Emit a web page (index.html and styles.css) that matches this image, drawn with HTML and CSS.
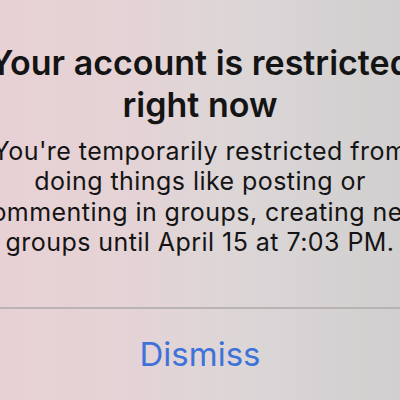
FILE: index.html
```html
<!DOCTYPE html>
<html lang="en">
<head>
    <meta charset="UTF-8">
    <meta name="viewport" content="width=device-width, initial-scale=1.0">
    <title>Account restricted</title>
    <link rel="stylesheet" href="styles.css">
</head>
<body>
    <div class="alert">
        <div class="alert-body">
            <h1 class="alert-title">Your account is restricted<br>right now</h1>
            <p class="alert-message">You're temporarily restricted from<br>doing things like posting or<br>commenting in groups, creating new<br>groups until April 15 at 7:03 PM.</p>
        </div>
        <div class="alert-actions">
            <button class="alert-button">Dismiss</button>
        </div>
    </div>
</body>
</html>
```

FILE: styles.css
```css
:root {
    --text: #141414;
    --blue: #3d72d9;
    --divider: #b9b3b4;
}

* {
    box-sizing: border-box;
    margin: 0;
    padding: 0;
}

html, body {
    height: 100%;
}

body {
    font-family: Inter, "Noto Sans", sans-serif;
    background: linear-gradient(90deg, #e8d1d4 0%, #e4d3d6 35%, #dcd6d7 60%, #d1cfcf 100%);
    overflow: hidden;
    display: flex;
    justify-content: center;
}

.alert {
    width: 460px;
    flex-shrink: 0;
    display: flex;
    flex-direction: column;
    text-align: center;
    color: var(--text);
}

.alert-body {
    padding-top: 42px;
    padding-bottom: 50px;
    border-bottom: 2px solid var(--divider);
}

.alert-title {
    font-size: 34px;
    line-height: 42px;
    font-weight: 600;
    margin-bottom: 10px;
}

.alert-message {
    font-size: 25px;
    line-height: 30.3px;
    font-weight: 400;
    letter-spacing: 0.45px;
}

.alert-actions {
    padding-top: 25px;
    display: flex;
    justify-content: center;
}

.alert-button {
    background: none;
    border: none;
    font-family: inherit;
    font-size: 33px;
    line-height: 40px;
    color: var(--blue);
    cursor: pointer;
}
```
